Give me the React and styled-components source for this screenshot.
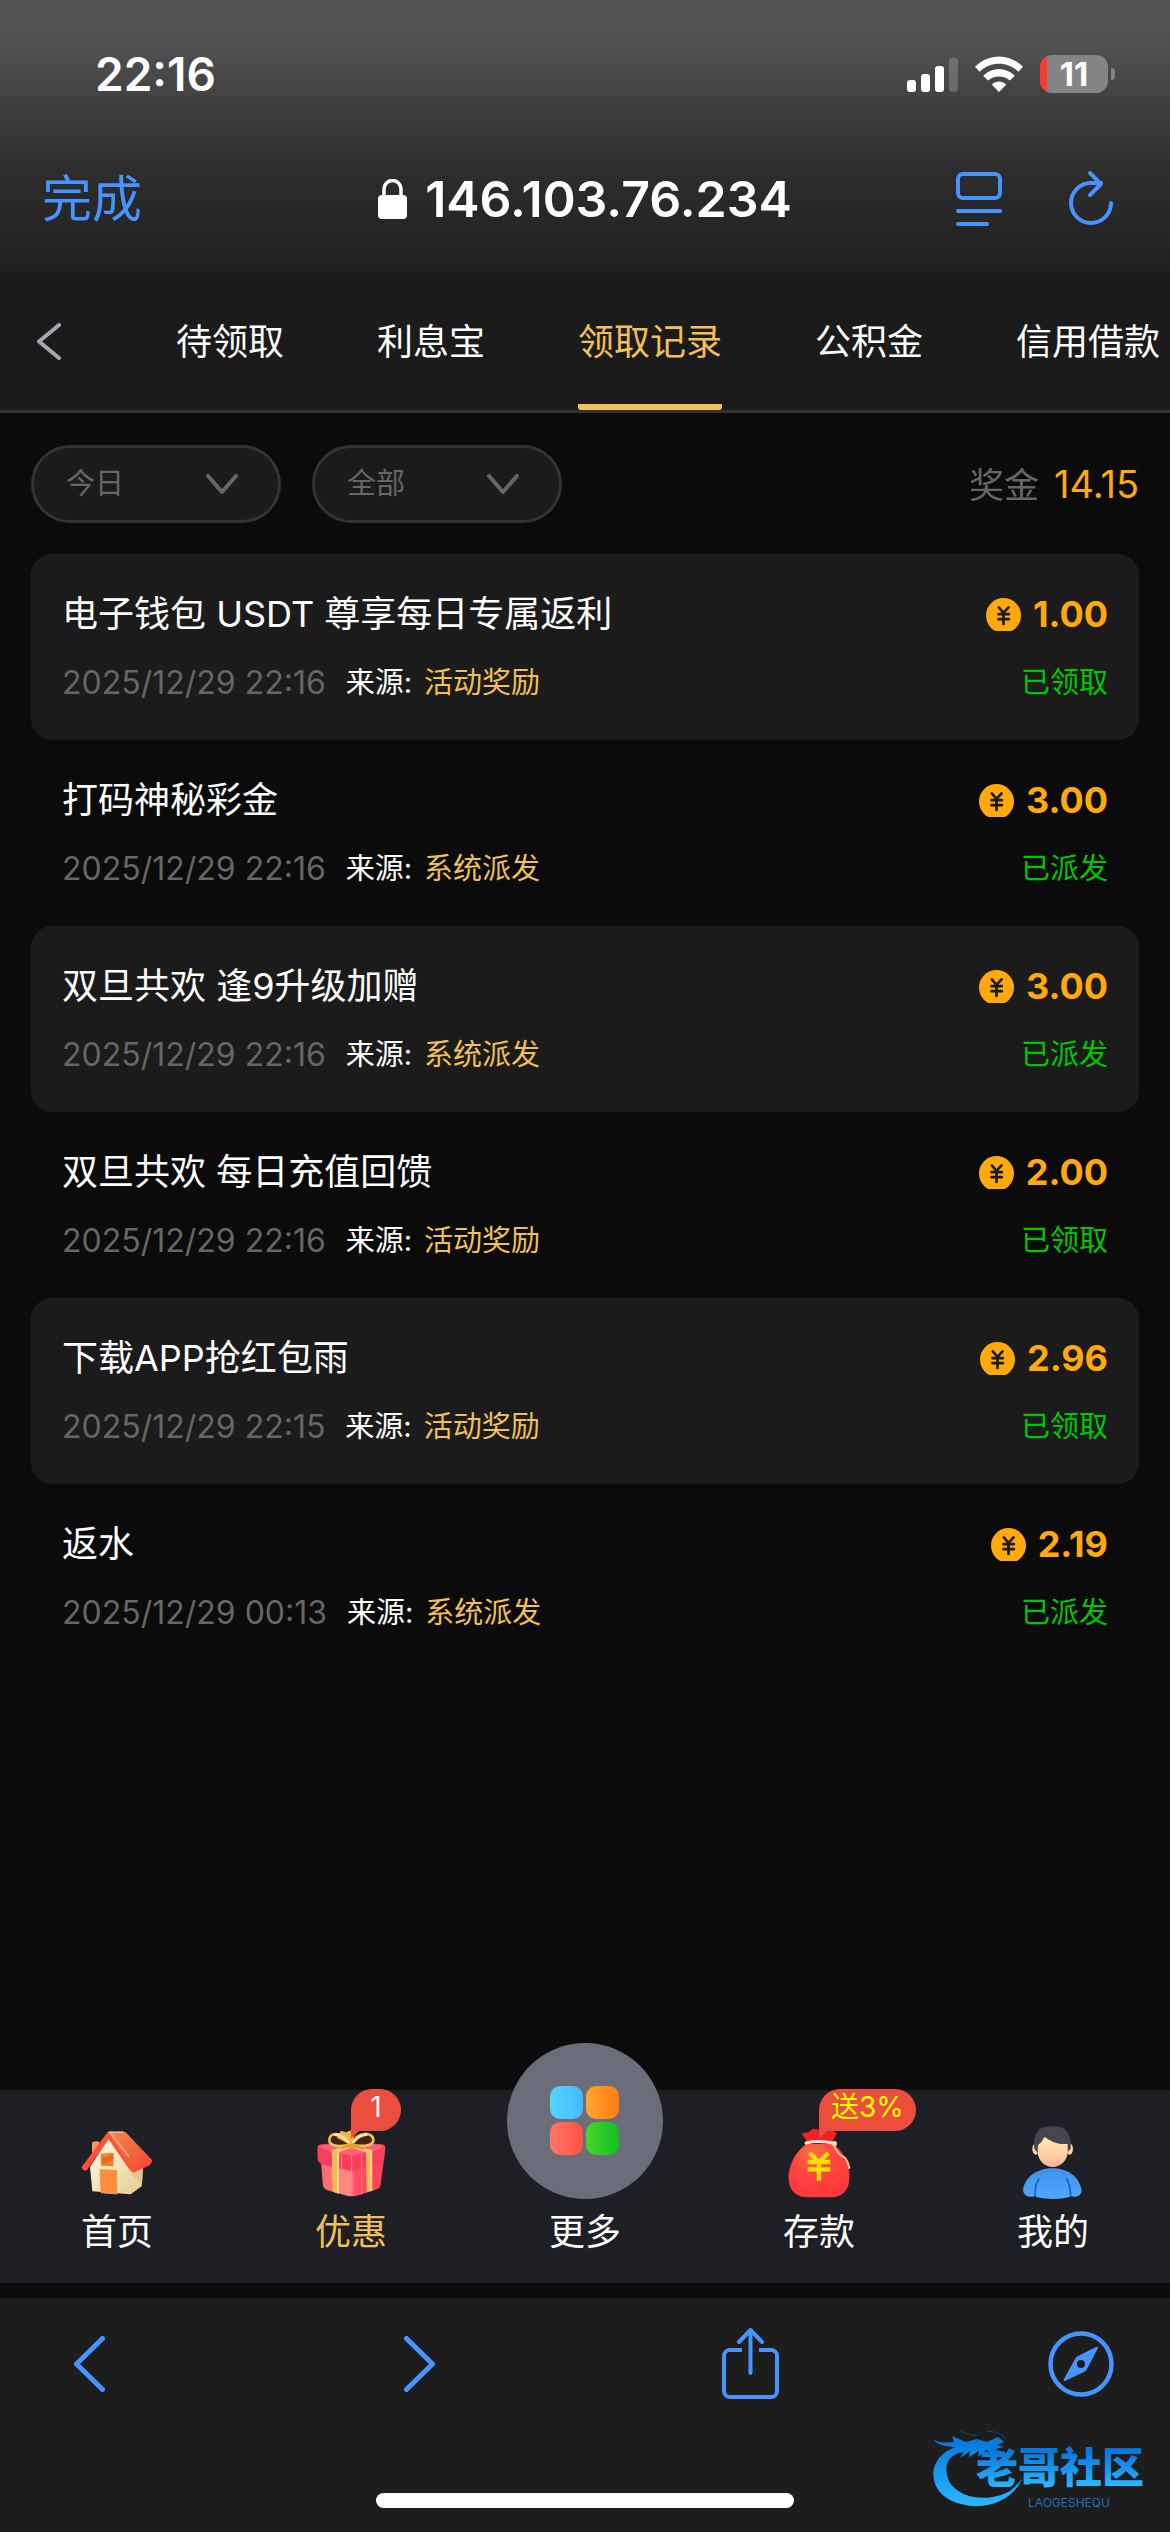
import React, { useState } from "react";
import styled, { createGlobalStyle } from "styled-components";

const GlobalStyle = createGlobalStyle`
  * { box-sizing: border-box; }
  body {
    margin: 0;
    background: #0b0b0b;
    color: #fff;
    font-family: Inter, "Noto Sans CJK SC", sans-serif;
    font-size: 36px;
  }
  button, select {
    margin: 0;
    padding: 0;
    border: 0;
    background: none;
    color: inherit;
    font: inherit;
    cursor: pointer;
  }
  a { color: inherit; text-decoration: none; }
  svg { display: block; flex: none; }
`;

const Page = styled.div`
  display: flex;
  flex-direction: column;
  min-height: 100vh;
`;

const BrowserTop = styled.header`
  background: linear-gradient(#555 0, #505050 18%, #2e2e2e 60%, #202020 100%);
`;

const StatusBar = styled.div`
  display: flex;
  align-items: center;
  justify-content: space-between;
  height: 148px;
  padding: 0 55px 0 95px;
`;

const Clock = styled.time`
  font-size: 46px;
  font-weight: 600;
`;

const StatusIcons = styled.div`
  display: flex;
  align-items: center;
  gap: 17px;
`;

const Battery = styled.div`
  display: flex;
  align-items: center;
  gap: 3px;
`;

const BatteryBody = styled.div`
  width: 68px;
  height: 38px;
  border-radius: 12px;
  background: linear-gradient(90deg, #ff3b30 7px, #858585 7px);
  font-size: 33px;
  font-weight: 700;
  line-height: 38px;
  text-align: center;
`;

const BatteryCap = styled.div`
  width: 4px;
  height: 12px;
  border-radius: 0 4px 4px 0;
  background: #858585;
`;

const AddressBar = styled.div`
  display: grid;
  grid-template-columns: 1fr auto 1fr;
  align-items: center;
  height: 125px;
  padding: 0 56px 24px 42px;
`;

const DoneButton = styled.button`
  justify-self: start;
  color: #4793ff;
  font-size: 50px;
  line-height: 60px;
`;

const Address = styled.div`
  display: flex;
  align-items: center;
  gap: 18px;
  margin-left: 14px;
  font-size: 50px;
  font-weight: 600;
  line-height: 60px;
`;

const AddressActions = styled.div`
  display: flex;
  justify-content: flex-end;
  gap: 66px;
  color: #4793ff;
`;

const TabBar = styled.nav`
  display: flex;
  align-items: stretch;
  height: 140px;
  border-bottom: 3px solid #333;
  background: #1b1b1b;
`;

const BackButton = styled.button`
  flex: none;
  width: 176px;
  padding-left: 36px;
  color: #a5a7b5;
`;

const TabList = styled.div`
  display: flex;
  gap: 93px;
  overflow: hidden;
`;

const Tab = styled.button`
  flex: none;
  padding-bottom: 6px;
  border-top: 6px solid transparent;
  border-bottom: 6px solid transparent;
  color: ${(p) => (p.$active ? "#f0c059" : "#fff")};
  background: ${(p) => (p.$active ? "linear-gradient(#f0c059, #f0c059) bottom / 100% 6px no-repeat border-box" : "none")};
  border-radius: 3px;
  white-space: nowrap;
`;

const Main = styled.main`
  flex: 1;
  padding: 32px 31px;
`;

const FilterBar = styled.div`
  display: flex;
  align-items: center;
  gap: 31px;
  margin-bottom: 31px;
`;

const FilterField = styled.label`
  display: flex;
  align-items: center;
  width: 250px;
  height: 78px;
  padding: 0 40px 0 32px;
  border: 3px solid #333;
  border-radius: 39px;
  background: #1b1b1b;
  color: #666;
`;

const FilterSelect = styled.select`
  flex: 1;
  min-width: 0;
  appearance: none;
  outline: 0;
  font-size: 29px;
  line-height: 44px;
`;

const BonusTotal = styled.div`
  display: flex;
  align-items: baseline;
  gap: 15px;
  margin-left: auto;
  color: #666;
  font-size: 35px;
  line-height: 50px;
`;

const BonusValue = styled.span`
  color: #ffa90a;
  font-size: 38px;
`;

const RecordList = styled.ul`
  margin: 0;
  padding: 0;
  list-style: none;
`;

const RecordRow = styled.li`
  display: flex;
  flex-direction: column;
  justify-content: center;
  gap: 19px;
  height: 186px;
  padding: 3px 31px 0;
  border-radius: 21px;

  &:nth-child(odd) { background: #1b1b1b; }
`;

const RecordLine = styled.div`
  display: flex;
  align-items: center;
  justify-content: space-between;
  line-height: 50px;
`;

const RecordTitle = styled.span`
  white-space: nowrap;
`;

const Amount = styled.span`
  display: flex;
  align-items: center;
  gap: 12px;
  color: #ffa90a;
  font-weight: 700;
`;

const RecordMeta = styled.span`
  display: flex;
  font-size: 29px;
  white-space: nowrap;
`;

const RecordDate = styled.time`
  margin-right: 20px;
  color: #666;
  font-size: 32px;
`;

const RecordSource = styled.span`
  margin-left: 12px;
  color: #f0c059;
`;

const RecordStatus = styled.span`
  color: #00c800;
  font-size: 29px;
`;

const BottomNav = styled.nav`
  display: flex;
  height: 193px;
  margin-bottom: 15px;
  background: #1e1f24;
`;

const NavItem = styled.a`
  position: relative;
  display: flex;
  flex: 1;
  flex-direction: column;
  align-items: center;
  justify-content: flex-end;
  gap: 8px;
  padding-bottom: 26px;
  color: ${(p) => (p.$active ? "#f0c059" : "#fff")};
  line-height: 50px;
`;

const MoreCircle = styled.span`
  display: grid;
  place-items: center;
  flex: none;
  width: 156px;
  height: 156px;
  border-radius: 50%;
  background: #6b6d78;
`;

const Badge = styled.span`
  position: absolute;
  top: -1px;
  left: 50%;
  height: 42px;
  min-width: 50px;
  padding: 0 12px;
  border-radius: 21px 21px 21px 0;
  background: #ec4e3d;
  color: ${(p) => (p.$yellow ? "#ff0" : "#fff")};
  font-size: 28px;
  line-height: 37px;
  text-align: center;
  white-space: nowrap;

  &::after {
    content: "";
    position: absolute;
    top: 41px;
    left: 0;
    border-top: 9px solid #ec4e3d;
    border-right: 9px solid transparent;
  }
`;

const BrowserBottom = styled.footer`
  position: relative;
  height: 234px;
  background: #1d1d1d;
`;

const BrowserActions = styled.div`
  display: flex;
  align-items: center;
  justify-content: space-between;
  height: 132px;
  padding: 0 56px;
  color: #4793ff;
`;

const BrowserAction = styled.button`
  display: grid;
  place-items: center;
  width: 66px;
`;

const HomeIndicator = styled.div`
  position: absolute;
  bottom: 24px;
  left: 50%;
  width: 418px;
  height: 15px;
  margin-left: -209px;
  border-radius: 8px;
  background: #fff;
`;

const LogoMark = styled.svg`
  position: absolute;
  right: 14px;
  bottom: 22px;
`;

function Signal() {
  return (
    <svg width="51" height="36" viewBox="0 0 51 36" fill="#fff">
      <rect x="0" y="24" width="9" height="12" rx="3" />
      <rect x="14" y="18" width="9" height="18" rx="3" />
      <rect x="28" y="10" width="9" height="26" rx="3" />
      <rect x="42" y="2" width="9" height="34" rx="3" opacity=".2" />
    </svg>
  );
}

function Wifi() {
  return (
    <svg width="48" height="36" viewBox="254 45 146 108" fill="#fff">
      <path d="M254 77C296 35 358 35 400 77L386 92C352 60 302 60 268 92Z" />
      <path d="M279 104C307 77 347 77 375 104L360 119C342 102 312 102 294 119Z" />
      <path d="M305 131C318 119 336 119 349 131L327 154Z" />
    </svg>
  );
}

function Lock() {
  return (
    <svg width="29" height="40" viewBox="0 0 29 40">
      <path d="M6 18V10a8.500 8.500 0 0 1 17 0v8" fill="none" stroke="#fff" strokeWidth="3.500" />
      <rect x="0" y="16" width="29" height="24" rx="4" fill="#fff" />
    </svg>
  );
}

function ReaderIcon() {
  return (
    <svg width="46" height="54" viewBox="0 0 46 54" fill="none" stroke="currentColor" strokeWidth="4" strokeLinecap="round">
      <rect x="2" y="2" width="42" height="24" rx="5" />
      <path d="M2 39H44M2 52H31" />
    </svg>
  );
}

function ReloadIcon() {
  return (
    <svg width="46" height="54" viewBox="0 0 46 54" overflow="visible" fill="none" stroke="currentColor" strokeWidth="4" strokeLinecap="round" strokeLinejoin="round">
      <path d="M43 31A20 20 0 1 1 23 11H33" />
      <path d="M22 1L33 12L22 23" />
    </svg>
  );
}

function Angle({ width, height, weight, direction }) {
  const i = weight / 2;
  const paths = {
    left: `M${width - i} ${i}L${i + 1} ${height / 2}L${width - i} ${height - i}`,
    right: `M${i} ${i}L${width - i - 1} ${height / 2}L${i} ${height - i}`,
    down: `M${i} ${i}L${width / 2} ${height - i}L${width - i} ${i}`,
  };
  return (
    <svg width={width} height={height} viewBox={`0 0 ${width} ${height}`} fill="none" stroke="currentColor" strokeWidth={weight} strokeLinecap="round" strokeLinejoin="round">
      <path d={paths[direction]} />
    </svg>
  );
}

function ShareIcon() {
  return (
    <svg width="57" height="72" viewBox="0 0 57 72" fill="none" stroke="currentColor" strokeWidth="4" strokeLinecap="round" strokeLinejoin="round">
      <path d="M20 22H8a6 6 0 0 0-6 6V63a6 6 0 0 0 6 6H49a6 6 0 0 0 6-6V28a6 6 0 0 0-6-6H37" strokeLinecap="butt" />
      <path d="M28.500 45V3M17 14L28.500 2L40 14" />
    </svg>
  );
}

function CompassIcon() {
  return (
    <svg width="66" height="66" viewBox="0 0 66 66">
      <circle cx="33" cy="33" r="30.500" fill="none" stroke="currentColor" strokeWidth="4.500" />
      <path fillRule="evenodd" fill="currentColor" d="M50 17L39 38Q38 40 36 41L17 50Q15 50 16 48L27 28Q28 26 30 25L48 16Q50 15 50 17ZM33 29a4 4 0 1 0 0 8a4 4 0 0 0 0-8Z" />
    </svg>
  );
}

function Coin() {
  return (
    <svg width="35" height="33" viewBox="247 174 104 98">
      <circle cx="299" cy="226" r="52" fill="#ffa90a" />
      <path d="M285 202L299 218L314 202M299 218V251M284 222H315M284 237H315" fill="none" stroke="#1b1b1b" strokeWidth="8" strokeLinecap="round" />
    </svg>
  );
}

function HomeIcon() {
  return (
    <svg width="72" height="72" viewBox="33 162 216 216">
      <defs>
        <linearGradient id="roof" x1="0" y1="0" x2="1" y2="1">
          <stop offset="0" stopColor="#ff8350" />
          <stop offset=".45" stopColor="#ee6d3f" />
          <stop offset="1" stopColor="#ff3d38" />
        </linearGradient>
        <linearGradient id="wall" x1="0" y1="0" x2="1" y2="1">
          <stop offset="0" stopColor="#fffbe9" />
          <stop offset="1" stopColor="#e5cd91" />
        </linearGradient>
      </defs>
      <path d="M66 208Q76 203 88 206V232L66 252Z" fill="#f29a60" />
      <path d="M116 196L60 282L67 355L182 364L215 340L220 275Z" fill="url(#wall)" />
      <path d="M178 290L220 278L217 326Q190 322 178 290Z" fill="#d9bb80" opacity=".6" />
      <path d="M113 177H163Q167 177 170 181L246 261Q248 268 240 276L194 298Q185 298 180 288Z" fill="url(#roof)" />
      <path d="M113 177L188 287L194 298Q183 297 175 285L116 199L51 291Q39 297 35 282Z" fill="#ff5138" />
      <path d="M121 181L177 250" stroke="#ffb39b" strokeWidth="4" fill="none" />
      <path d="M116 177H161" stroke="#fff0df" strokeWidth="3" />
      <path d="M91 241L132 238V282L91 279Z" fill="#f28230" stroke="#f9e2b2" strokeWidth="3" />
      <path d="M98 256L130 244V258L98 276Z" fill="#e36a1e" />
      <path d="M90 290L140 292L141 363L93 359Z" fill="#ff8d3c" stroke="#dca65c" strokeWidth="3" />
    </svg>
  );
}

function GiftIcon() {
  return (
    <svg width="72" height="72" viewBox="735 162 216 216">
      <defs>
        <linearGradient id="box" x1="0" y1="0" x2="1" y2="0">
          <stop offset="0" stopColor="#ff6570" />
          <stop offset=".45" stopColor="#ff8c82" />
          <stop offset=".55" stopColor="#ff4d69" />
          <stop offset="1" stopColor="#ff3f5b" />
        </linearGradient>
      </defs>
      <path d="M752 258L759 338Q761 347 770 351L834 369Q847 371 861 368L921 349Q931 345 932 333L942 258Z" fill="url(#box)" />
      <path d="M742 223Q744 214 756 214L843 206L934 214Q945 215 946 224L943 258Q940 266 928 271L847 295L759 275Q745 271 743 258Z" fill="#f83d5f" />
      <path d="M747 218L843 207L941 218Q930 235 870 242L845 249L815 242Q760 235 747 218Z" fill="#ff6075" />
      <path d="M785 231L808 236L806 362L788 356ZM888 236L907 231V353L890 358Z" fill="#efbd59" />
      <path d="M804 235V361M903 233V354" stroke="#ffe4a0" strokeWidth="4" />
      <path d="M785 231L842 216L908 232L888 238L844 224L808 237Z" fill="#f9cd70" />
      <path d="M845 249V367M815 243V363M875 242V364" stroke="#ffa29b" strokeWidth="3" opacity=".65" />
      <path d="M843 215C815 222 778 222 778 202C777 177 815 172 843 215C862 173 911 176 910 202C909 222 870 221 843 215Z" fill="#40251b" stroke="#f4bd59" strokeWidth="8" />
      <path d="M813 173L828 178L843 172L853 183L847 218L800 194Z" fill="#eeb64a" />
      <path d="M792 185Q820 185 836 210M892 184Q865 186 849 210" fill="none" stroke="#ffe3a4" strokeWidth="8" />
      <path d="M806 231Q821 211 845 213Q874 214 886 232Q844 217 806 231Z" fill="#e89a34" />
    </svg>
  );
}

function BagIcon() {
  return (
    <svg width="72" height="72" viewBox="39 162 216 216">
      <defs>
        <radialGradient id="bag" cx=".4" cy=".2" r=".8">
          <stop offset="0" stopColor="#ff7145" />
          <stop offset=".45" stopColor="#ff4640" />
          <stop offset="1" stopColor="#ff373c" />
        </radialGradient>
      </defs>
      <path d="M95 180L115 178L129 167L151 171L178 168L201 181L186 208H112Z" fill="#f71f27" />
      <path d="M108 213L188 212Q225 239 235 279C243 320 240 373 182 373H113C54 371 48 317 62 278Q72 242 108 213Z" fill="url(#bag)" />
      <path d="M108 210Q145 201 194 211" fill="none" stroke="#ffe1cf" strokeWidth="9" strokeLinecap="round" />
      <path d="M190 209Q200 244 223 253Q232 260 238 285" fill="none" stroke="#f1c28f" strokeWidth="6" strokeLinecap="round" />
      <circle cx="193" cy="212" r="8" fill="#ffd6a4" />
      <path d="M119 240L147 267L175 240M147 267V323M113 267H181M113 289H181" fill="none" stroke="#ffdf08" strokeWidth="13" />
    </svg>
  );
}

function PersonIcon() {
  return (
    <svg width="72" height="72" viewBox="741 162 216 216" overflow="visible">
      <defs>
        <linearGradient id="face" x1="0" y1="0" x2="0" y2="1">
          <stop offset="0" stopColor="#ffe7ae" />
          <stop offset=".6" stopColor="#ffd3a5" />
          <stop offset="1" stopColor="#ffac96" />
        </linearGradient>
        <linearGradient id="shirt" x1="0" y1="0" x2="0" y2="1">
          <stop offset="0" stopColor="#3e91e8" />
          <stop offset="1" stopColor="#50a8ff" />
        </linearGradient>
      </defs>
      <ellipse cx="797" cy="228" rx="10" ry="17" fill="#ffd1aa" />
      <ellipse cx="899" cy="228" rx="10" ry="17" fill="#ffd1aa" />
      <path d="M793 227C788 187 804 160 837 160H858C889 160 905 188 902 227L890 240H803Z" fill="#47434f" />
      <path d="M804 216Q816 208 823 192C845 204 855 215 893 213V238C892 263 872 282 848 282C824 282 804 263 803 238Z" fill="url(#face)" />
      <path d="M759 352C765 309 804 286 847 286C891 286 928 309 935 352C933 370 920 374 902 370C884 380 815 381 796 370C776 374 762 370 759 352Z" fill="url(#shirt)" />
      <path d="M807 318Q795 334 795 368M890 318Q901 335 902 368" fill="none" stroke="#1764b4" strokeWidth="5" strokeLinecap="round" />
    </svg>
  );
}

function GridIcon() {
  return (
    <svg width="70" height="70" viewBox="0 0 70 70">
      <defs>
        <linearGradient id="g1"><stop stopColor="#57d5ff" /><stop offset="1" stopColor="#46b8ff" /></linearGradient>
        <linearGradient id="g2"><stop stopColor="#ffa631" /><stop offset="1" stopColor="#ff7c10" /></linearGradient>
        <linearGradient id="g3"><stop stopColor="#ff7769" /><stop offset="1" stopColor="#ff5143" /></linearGradient>
        <linearGradient id="g4"><stop stopColor="#45d52b" /><stop offset="1" stopColor="#14be22" /></linearGradient>
      </defs>
      <rect x="0" y="0" width="33" height="33" rx="10" fill="url(#g1)" />
      <rect x="36" y="0" width="33" height="33" rx="10" fill="url(#g2)" />
      <rect x="0" y="36" width="33" height="33" rx="10" fill="url(#g3)" />
      <rect x="36" y="36" width="33" height="33" rx="10" fill="url(#g4)" />
    </svg>
  );
}

function CommunityLogo() {
  return (
    <LogoMark width="224" height="80" viewBox="0 0 224 80" role="img" aria-label="老哥社区 LAOGESHEQU">
      <defs>
        <linearGradient id="dragon" x1="0" y1="10" x2="0" y2="74" gradientUnits="userSpaceOnUse">
          <stop offset="0" stopColor="#0878dd" />
          <stop offset="1" stopColor="#2ab5ff" />
        </linearGradient>
        <linearGradient id="word" x1="0" y1="22" x2="0" y2="56" gradientUnits="userSpaceOnUse">
          <stop offset="0" stopColor="#0878dd" />
          <stop offset="1" stopColor="#2ab5ff" />
        </linearGradient>
      </defs>
      <path d="M28 16C-4 23-7 57 18 70C44 83 79 75 90 49Q84 56 78 61C58 72 30 70 18 53C8 33 20 22 34 22Z" fill="url(#dragon)" />
      <path d="M1 9Q7 14 22 12L20 6L34 12L45 9L55 12L66 7L72 12L65 15L72 17L63 19L70 22L63 24L54 20L46 27L47 21L37 27L38 21L28 28L33 20L20 22L27 17Q6 17 1 9Z" fill="url(#dragon)" />
      <path d="M28 1Q38 6 45 5M54 1Q70 2 73 8" fill="none" stroke="#134368" strokeWidth="1" />
      <text x="44" y="53" fill="url(#word)" fontFamily="Noto Sans CJK SC, sans-serif" fontWeight="900" fontSize="42">老哥社区</text>
      <text x="96" y="77" fill="#1674b8" fontFamily="Inter, sans-serif" fontSize="12">LAOGESHEQU</text>
    </LogoMark>
  );
}

const TABS = ["待领取", "利息宝", "领取记录", "公积金", "信用借款"];

const RECORDS = [
  { title: "电子钱包 USDT 尊享每日专属返利", date: "2025/12/29 22:16", source: "活动奖励", amount: "1.00", status: "已领取" },
  { title: "打码神秘彩金", date: "2025/12/29 22:16", source: "系统派发", amount: "3.00", status: "已派发" },
  { title: "双旦共欢 逢9升级加赠", date: "2025/12/29 22:16", source: "系统派发", amount: "3.00", status: "已派发" },
  { title: "双旦共欢 每日充值回馈", date: "2025/12/29 22:16", source: "活动奖励", amount: "2.00", status: "已领取" },
  { title: "下载APP抢红包雨", date: "2025/12/29 22:15", source: "活动奖励", amount: "2.96", status: "已领取" },
  { title: "返水", date: "2025/12/29 00:13", source: "系统派发", amount: "2.19", status: "已派发" },
];

const NAV = [
  { label: "首页", icon: <HomeIcon /> },
  { label: "优惠", icon: <GiftIcon />, badge: "1", active: true },
  { label: "更多", icon: <MoreCircle><GridIcon /></MoreCircle> },
  { label: "存款", icon: <BagIcon />, badge: "送3%", yellow: true },
  { label: "我的", icon: <PersonIcon /> },
];

function Filter({ label, options }) {
  return (
    <FilterField>
      <FilterSelect aria-label={label}>
        {options.map((o) => <option key={o}>{o}</option>)}
      </FilterSelect>
      <Angle width={32} height={20} weight={4} direction="down" />
    </FilterField>
  );
}

export default function App() {
  const [tab, setTab] = useState("领取记录");
  return (
    <Page>
      <GlobalStyle />
      <BrowserTop>
        <StatusBar>
          <Clock>22:16</Clock>
          <StatusIcons>
            <Signal />
            <Wifi />
            <Battery>
              <BatteryBody>11</BatteryBody>
              <BatteryCap />
            </Battery>
          </StatusIcons>
        </StatusBar>
        <AddressBar>
          <DoneButton>完成</DoneButton>
          <Address><Lock />146.103.76.234</Address>
          <AddressActions>
            <button aria-label="阅读模式"><ReaderIcon /></button>
            <button aria-label="刷新"><ReloadIcon /></button>
          </AddressActions>
        </AddressBar>
      </BrowserTop>

      <TabBar>
        <BackButton aria-label="返回"><Angle width={25} height={37} weight={4} direction="left" /></BackButton>
        <TabList>
          {TABS.map((t) => (
            <Tab key={t} $active={t === tab} onClick={() => setTab(t)}>{t}</Tab>
          ))}
        </TabList>
      </TabBar>

      <Main>
        <FilterBar>
          <Filter label="日期" options={["今日", "昨日"]} />
          <Filter label="类型" options={["全部"]} />
          <BonusTotal>奖金<BonusValue>14.15</BonusValue></BonusTotal>
        </FilterBar>
        <RecordList>
          {RECORDS.map((r) => (
            <RecordRow key={r.title}>
              <RecordLine>
                <RecordTitle>{r.title}</RecordTitle>
                <Amount><Coin />{r.amount}</Amount>
              </RecordLine>
              <RecordLine>
                <RecordMeta>
                  <RecordDate>{r.date}</RecordDate>
                  来源:
                  <RecordSource>{r.source}</RecordSource>
                </RecordMeta>
                <RecordStatus>{r.status}</RecordStatus>
              </RecordLine>
            </RecordRow>
          ))}
        </RecordList>
      </Main>

      <BottomNav>
        {NAV.map((n) => (
          <NavItem key={n.label} href="#" $active={n.active}>
            {n.icon}
            {n.badge && <Badge $yellow={n.yellow}>{n.badge}</Badge>}
            {n.label}
          </NavItem>
        ))}
      </BottomNav>

      <BrowserBottom>
        <BrowserActions>
          <BrowserAction aria-label="后退"><Angle width={32} height={56} weight={5} direction="left" /></BrowserAction>
          <BrowserAction aria-label="前进"><Angle width={32} height={56} weight={5} direction="right" /></BrowserAction>
          <BrowserAction aria-label="分享"><ShareIcon /></BrowserAction>
          <BrowserAction aria-label="在浏览器中打开"><CompassIcon /></BrowserAction>
        </BrowserActions>
        <HomeIndicator />
        <CommunityLogo />
      </BrowserBottom>
    </Page>
  );
}
